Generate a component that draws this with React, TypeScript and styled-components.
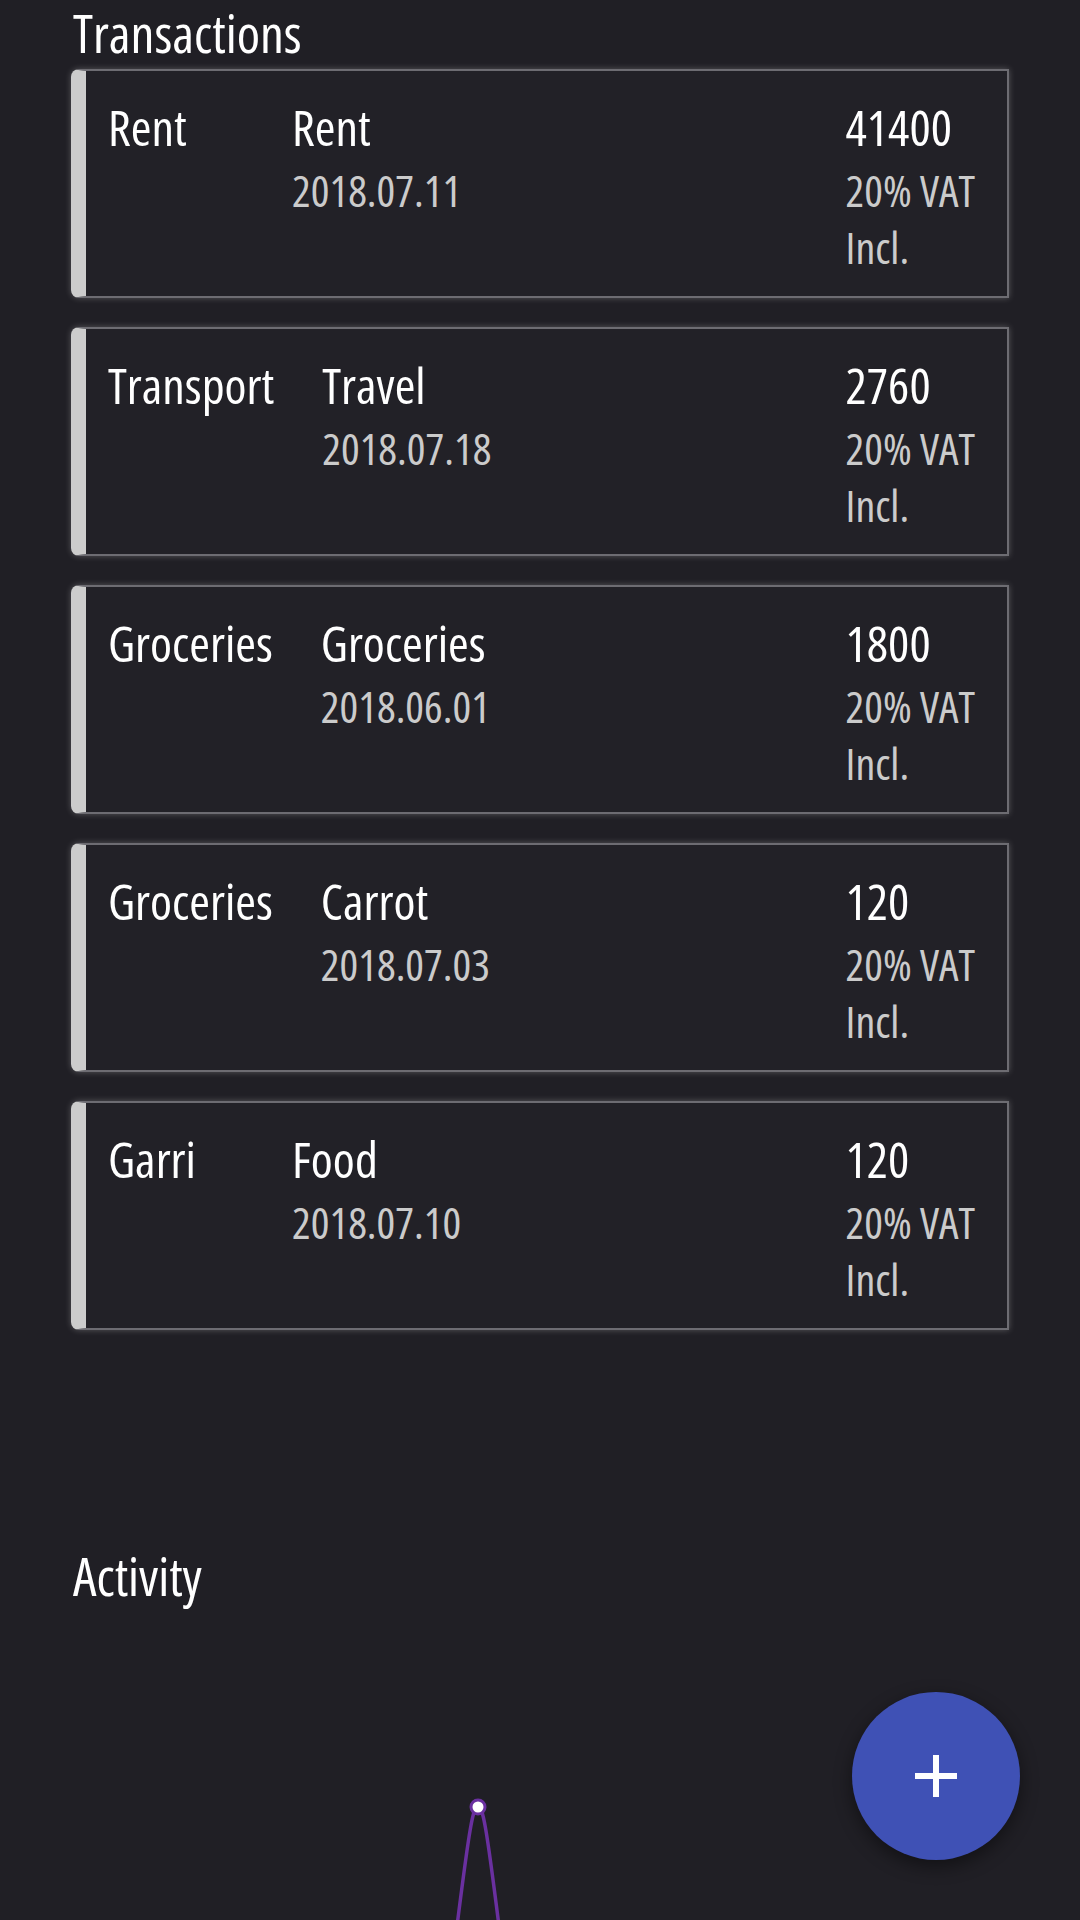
import React from 'react';
import styled, { createGlobalStyle } from 'styled-components';

const GlobalStyle = createGlobalStyle`
    html, body {
        margin: 0;
        padding: 0;
        background: #201f25;
        font-family: "Open Sans", "Noto Sans", sans-serif;
        font-stretch: 75%;
        color: #fff;
    }
`;

const Page = styled.main`
    padding: 6px 71px 0;
    overflow: hidden;
    height: 1914px;
`;

const SectionTitle = styled.h2<{ $gap?: number }>`
    margin: ${({ $gap }) => $gap ?? 0}px 0 9px 2px;
    font-size: 53px;
    line-height: 54px;
    font-weight: 400;
`;

const List = styled.section`
    display: flex;
    flex-direction: column;
    gap: 29px;
`;

const Card = styled.article`
    display: flex;
    background: #222127;
    border: 2px solid #6d6c72;
    border-left: 15px solid #cccccc;
    border-radius: 8px 0 0 8px;
    box-shadow: 0 0 6px rgba(255, 255, 255, 0.25);
    padding: 25px 32px 20px 22px;
`;

const Category = styled.div`
    min-width: 136px;
    margin-right: 48px;
    font-size: 50px;
    line-height: 63px;
`;

const Details = styled.div`
    flex: 1;
    display: flex;
    flex-direction: column;
`;

const Main = styled.div`
    font-size: 50px;
    line-height: 63px;
`;

const Sub = styled.div`
    margin-top: 3px;
    font-size: 44px;
    line-height: 57px;
    color: #cbcbcb;
`;

const Amount = styled.div`
    display: flex;
    flex-direction: column;
`;

const Chart = styled.svg`
    display: block;
    margin-top: 7px;
`;

const Fab = styled.button`
    position: fixed;
    right: 60px;
    bottom: 60px;
    width: 168px;
    height: 168px;
    border: none;
    border-radius: 50%;
    background: #3f51b5;
    box-shadow: 0 6px 18px rgba(0, 0, 0, 0.45);
    display: flex;
    align-items: center;
    justify-content: center;
    padding: 0;
`;

const transactions = [
    { category: 'Rent', name: 'Rent', date: '2018.07.11', amount: '41400' },
    { category: 'Transport', name: 'Travel', date: '2018.07.18', amount: '2760' },
    { category: 'Groceries', name: 'Groceries', date: '2018.06.01', amount: '1800' },
    { category: 'Groceries', name: 'Carrot', date: '2018.07.03', amount: '120' },
    { category: 'Garri', name: 'Food', date: '2018.07.10', amount: '120' },
];

export default function App() {
    return (
        <>
            <GlobalStyle />
            <Page>
                <SectionTitle>Transactions</SectionTitle>
                <List>
                    {transactions.map((t, i) => (
                        <Card key={i}>
                            <Category>{t.category}</Category>
                            <Details>
                                <Main>{t.name}</Main>
                                <Sub>{t.date}</Sub>
                            </Details>
                            <Amount>
                                <Main>{t.amount}</Main>
                                <Sub>
                                    20% VAT
                                    <br />
                                    Incl.
                                </Sub>
                            </Amount>
                        </Card>
                    ))}
                </List>
                <SectionTitle $gap={219}>Activity</SectionTitle>
                <Chart width="938" height="310" viewBox="0 0 938 310">
                    <path
                        d="M 384 330 C 399 210, 402 195, 407 195 C 412 195, 415 210, 430 330"
                        fill="none"
                        stroke="#6a30a0"
                        strokeWidth="3.5"
                    />
                    <circle cx="407" cy="195" r="7" fill="#fff" stroke="#6a30a0" strokeWidth="3" />
                </Chart>
            </Page>
            <Fab aria-label="Add">
                <svg width="42" height="42" viewBox="0 0 42 42">
                    <rect x="18" y="0" width="6" height="42" fill="#fff" />
                    <rect x="0" y="18" width="42" height="6" fill="#fff" />
                </svg>
            </Fab>
        </>
    );
}
